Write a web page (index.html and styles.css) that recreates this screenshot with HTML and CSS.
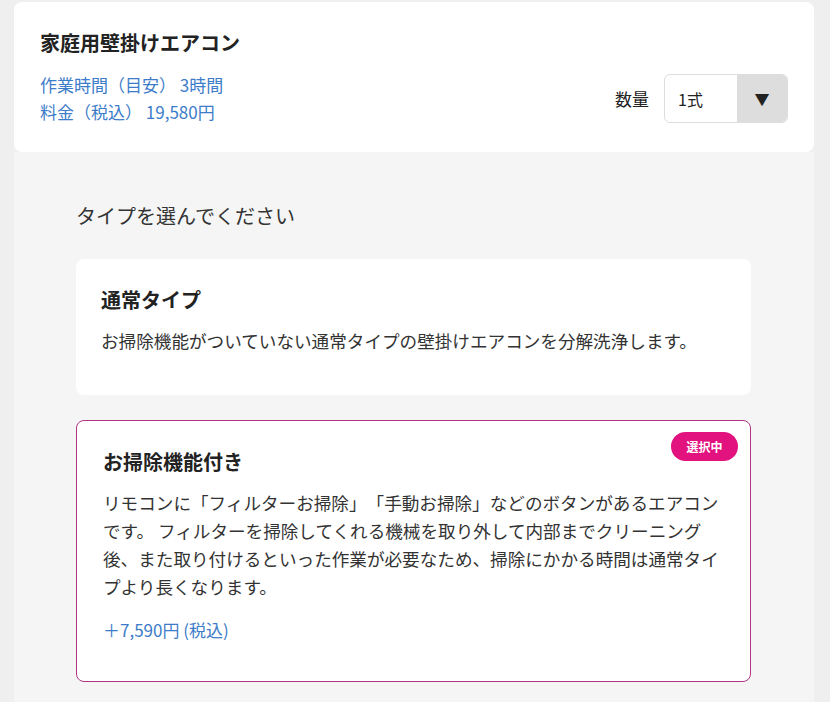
FILE: index.html
```html
<!DOCTYPE html>
<html lang="ja">
<head>
  <meta charset="UTF-8" />
  <meta name="viewport" content="width=device-width, initial-scale=1.0"/>
  <title>家庭用壁掛けエアコン</title>
  <link rel="stylesheet" href="styles.css">
</head>
<body>
  <div class="menu-card">
    <div class="menu-info">
      <h2 class="menu-title">家庭用壁掛けエアコン</h2>
      <p class="menu-meta">作業時間（目安） 3時間</p>
      <p class="menu-meta">料金（税込） 19,580円</p>
    </div>
    <div class="qty">
      <span class="qty-label">数量</span>
      <div class="qty-select">
        <span class="qty-value">1式</span>
        <span class="qty-arrow">▼</span>
      </div>
    </div>
  </div>

  <div class="panel">
    <p class="panel-title">タイプを選んでください</p>

    <div class="type-card">
      <h3 class="type-name">通常タイプ</h3>
      <p class="type-desc">お掃除機能がついていない通常タイプの壁掛けエアコンを分解洗浄します。</p>
    </div>

    <div class="type-card selected">
      <span class="badge">選択中</span>
      <h3 class="type-name">お掃除機能付き</h3>
      <p class="type-desc">リモコンに「フィルターお掃除」「手動お掃除」などのボタンがあるエアコンです。 フィルターを掃除してくれる機械を取り外して内部までクリーニング後、また取り付けるといった作業が必要なため、掃除にかかる時間は通常タイプより長くなります。</p>
      <p class="type-price">＋7,590円 (税込)</p>
    </div>
  </div>
</body>
</html>
```

FILE: styles.css
```css
body {
  margin: 0;
  padding: 2px 16px 0 14px;
  background-color: #efefef;
  font-family: "Noto Sans CJK JP", "Noto Sans", sans-serif;
  color: #333;
  text-spacing-trim: space-all;
}

p, h2, h3 {
  margin: 0;
}

.menu-card {
  display: flex;
  justify-content: space-between;
  align-items: flex-end;
  background-color: #fff;
  border-radius: 8px;
  padding: 26px 26px 27px 26px;
}

.menu-title {
  font-size: 20px;
  font-weight: bold;
  line-height: 30px;
  color: #222;
  margin-bottom: 13px;
}

.menu-meta {
  font-size: 17px;
  line-height: 27px;
  color: #3d7cc9;
}

.qty {
  display: flex;
  align-items: center;
  gap: 15px;
  margin-bottom: 2px;
}

.qty-label {
  font-size: 17px;
  color: #222;
}

.qty-select {
  display: flex;
  width: 124px;
  height: 49px;
  box-sizing: border-box;
  border: 1px solid #ddd;
  border-radius: 6px;
  overflow: hidden;
}

.qty-value {
  flex: 1;
  display: flex;
  align-items: center;
  padding-left: 13px;
  font-size: 16px;
  color: #222;
}

.qty-arrow {
  width: 50px;
  display: flex;
  align-items: center;
  justify-content: center;
  background-color: #ddd;
  font-size: 15px;
  color: #222;
}

.panel {
  background-color: #f5f5f5;
  padding: 49px 63px 20px 62px;
}

.panel-title {
  font-size: 20px;
  line-height: 30px;
  color: #333;
  margin-bottom: 28px;
}

.type-card {
  position: relative;
  background-color: #fff;
  border-radius: 8px;
  padding: 26px 25px 40px 25px;
  margin-bottom: 25px;
}

.type-card.selected {
  border: 1px solid #b03585;
  padding: 26px 22px 39px 26px;
  margin-bottom: 0;
}

.type-name {
  font-size: 20px;
  font-weight: bold;
  line-height: 30px;
  color: #222;
  margin-bottom: 12px;
}

.type-desc {
  font-size: 17.6px;
  line-height: 28px;
  color: #333;
}

.type-price {
  font-size: 17px;
  line-height: 24px;
  color: #3d7cc9;
  margin-top: 17px;
}

.badge {
  position: absolute;
  top: 11px;
  right: 12px;
  width: 67px;
  height: 29px;
  border-radius: 15px;
  background-color: #e2127f;
  color: #fff;
  font-size: 12px;
  font-weight: bold;
  display: flex;
  align-items: center;
  justify-content: center;
}
```
